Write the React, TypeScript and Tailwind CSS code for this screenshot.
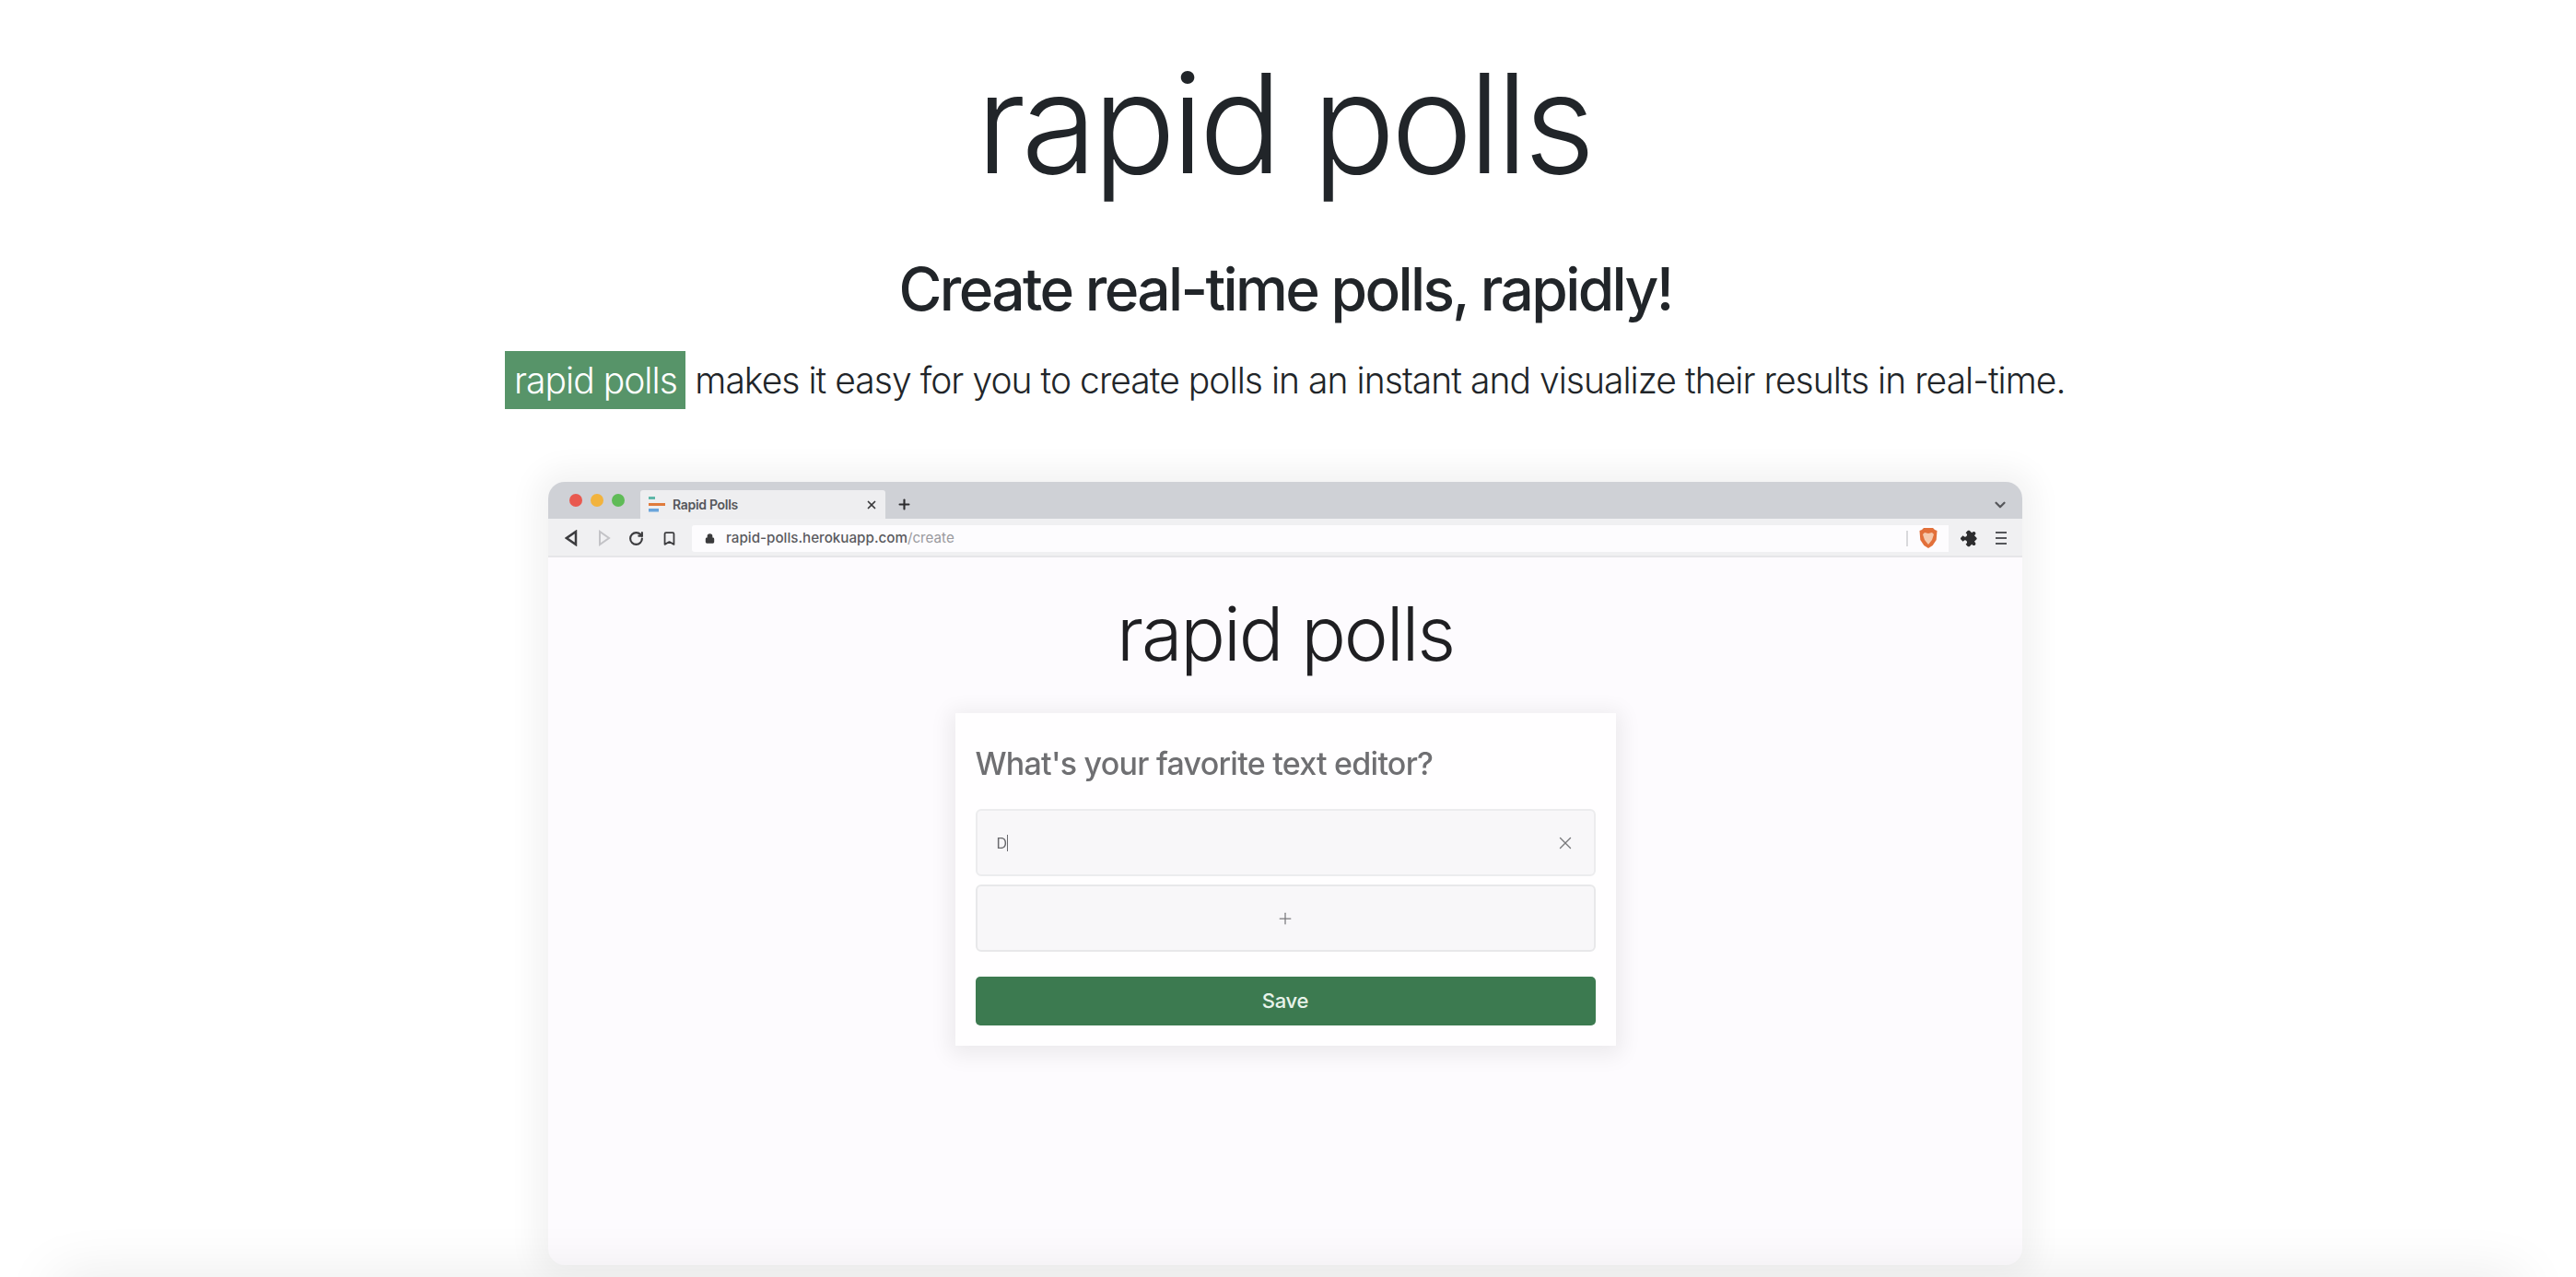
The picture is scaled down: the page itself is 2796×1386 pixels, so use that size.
import { Bookmark, ChevronDown, Lock, Plus, RotateCw, X } from "lucide-react";

function Favicon() {
  return (
    <svg width="20" height="20" viewBox="0 0 20 20">
      <rect x="1" y="1" width="7" height="3" fill="#5fb7a8" />
      <rect x="1" y="8" width="18" height="3" fill="#e07b3c" />
      <rect x="1" y="14" width="11" height="3.500" fill="#6aa5dc" />
    </svg>
  );
}

function BraveIcon() {
  return (
    <svg width="20" height="24" viewBox="0 0 20 24">
      <path d="M5 1h10l2 2 2.500 1-.8 10-4 6-4.700 3-4.700-3-4-6-.8-10L3 3z" fill="#e2703a" />
      <path d="M6 6l4 1 4-1 2 2-2 6-4 5-4-5-2-6z" fill="#f5c9ad" />
    </svg>
  );
}

function BrowserBar() {
  return (
    <div className="flex flex-col">
      <div className="flex h-[40px] items-end bg-[#cfd1d6]">
        <div className="flex h-[40px] w-[100px] shrink-0 items-center gap-[9px] pl-[23px]">
          <span className="size-[14px] rounded-full bg-[#e9594f]" />
          <span className="size-[14px] rounded-full bg-[#f2b33d]" />
          <span className="size-[14px] rounded-full bg-[#5fbb57]" />
        </div>
        <div className="flex h-[31px] w-[266px] items-center rounded-t-[3px] bg-[#eeeef0] pl-[8px] pr-[8px]">
          <Favicon />
          <span className="ml-[7px] text-[14px] font-semibold tracking-[-0.3px] text-[#55565a]">Rapid Polls</span>
          <X className="ml-auto size-[14px] text-[#3a3a3c]" strokeWidth={3} />
        </div>
        <Plus className="mb-[7px] ml-[12px] size-[17px] text-[#2c2c2e]" strokeWidth={3} />
        <ChevronDown className="mb-[6px] ml-auto mr-[15px] size-[18px] text-[#55565a]" strokeWidth={3} />
      </div>
      <div className="flex h-[42px] items-center border-b-2 border-[#e6e6e9] bg-[#f0f0f2] pl-[18px] pr-[17px] pt-[2px]">
        <svg width="14" height="18" viewBox="0 0 14 18" fill="none" stroke="#3c3c3f" strokeWidth="2.500">
          <path d="M12 2v14L2 9z" />
        </svg>
        <svg className="ml-[22px]" width="14" height="18" viewBox="0 0 14 18" fill="none" stroke="#c3c3c7" strokeWidth="2">
          <path d="M2 2v14l10-7z" />
        </svg>
        <RotateCw className="ml-[19px] size-[17px] text-[#3c3c3f]" strokeWidth={3} />
        <Bookmark className="ml-[19px] size-[17px] text-[#3c3c3f]" strokeWidth={2.5} />
        <div className="ml-[16px] flex h-[29px] flex-1 items-center rounded-l-[3px] bg-[#fdfcfe] pl-[14px] pr-[12px]">
          <Lock className="size-[11px] fill-[#3a3a3c] text-[#3a3a3c]" strokeWidth={2.5} />
          <span className="ml-[12px] text-[15.200px] font-medium text-[#5a5a5e]">
            rapid-polls.herokuapp.com<span className="font-normal text-[#9a9a9e]">/create</span>
          </span>
          <span className="ml-auto h-[17px] w-[2px] bg-[#d9d9dc]" />
          <span className="ml-[12px] flex">
            <BraveIcon />
          </span>
        </div>
        <svg className="ml-[14px] size-[19px] rotate-45" viewBox="0 0 24 24" fill="#2c2c2e">
          <path d="M20.500 11H19V7c0-1.100-.9-2-2-2h-4V3.500C13 2.120 11.880 1 10.500 1S8 2.120 8 3.500V5H4c-1.100 0-1.990.9-1.990 2v3.800H3.500c1.490 0 2.700 1.210 2.700 2.700s-1.210 2.700-2.700 2.700H2V20c0 1.100.9 2 2 2h3.800v-1.500c0-1.490 1.210-2.700 2.700-2.700 1.490 0 2.700 1.210 2.700 2.700V22H17c1.100 0 2-.9 2-2v-4h1.500c1.380 0 2.500-1.120 2.500-2.500S21.880 11 20.500 11z" />
        </svg>
        <svg className="ml-[18px]" width="12" height="16" viewBox="0 0 12 16" stroke="#55565a" strokeWidth="2">
          <path d="M0 2h12M0 8h12M0 14h12" />
        </svg>
      </div>
    </div>
  );
}

function PollCard() {
  return (
    <div className="mt-[36px] flex w-[717px] flex-col bg-[#fffeff] px-[22px] pb-[22px] pt-[31px] shadow-[0_4px_22px_6px_rgba(0,0,0,0.07)]">
      <h3 className="text-[34px] leading-[48px] font-[550] tracking-[-0.75px] text-[#6f6f72]">What's your favorite text editor?</h3>
      <div className="mt-[25px] flex h-[73px] items-center justify-between rounded-[6px] border-2 border-[#ececee] bg-[#f8f7f9] pl-[21px] pr-[20px]">
        <span className="flex items-center text-[16px] text-[#6a6a6e]">
          D<span className="h-[18px] w-px bg-[#6a6a6e]" />
        </span>
        <X className="size-[22px] text-[#79797c]" strokeWidth={1.5} />
      </div>
      <div className="mt-[9px] flex h-[73px] items-center justify-center rounded-[6px] border-2 border-[#e8e8ea] bg-[#f8f7f9]">
        <Plus className="size-[20px] text-[#79797c]" strokeWidth={1.5} />
      </div>
      <button className="mt-[27px] h-[53px] rounded-[5px] bg-[#3c7a50] text-[22px] font-medium tracking-[-0.3px] text-[#e8f3ea]">Save</button>
    </div>
  );
}

export default function App() {
  return (
    <div className="relative flex h-[1386px] w-[2796px] flex-col items-center overflow-hidden bg-white pr-[6px] font-['Inter',sans-serif] text-[#212529]">
      <h1 className="mt-[44px] -translate-x-[2px] text-[150px] leading-[180px] font-light tracking-[-4.9px]">rapid polls</h1>
      <h2 className="mt-[50px] text-[64px] leading-[80px] font-medium tracking-[-2.65px]">Create real-time polls, rapidly!</h2>
      <p className="mt-[29px] text-[39px] leading-[60px] font-[350] tracking-[-0.96px]">
        <mark className="bg-[#579469] px-[9.500px] py-[8px] text-white">rapid polls</mark> makes it easy for you to create polls in an instant and visualize their results in real-time.
      </p>
      <div className="mt-[80px] flex h-[850px] w-[1600px] shrink-0 flex-col overflow-hidden rounded-[18px] bg-[#fdfbfe] shadow-[0_0_32px_14px_rgba(0,0,0,0.05)]">
        <div className="flex h-full flex-col blur-[0.7px]">
          <BrowserBar />
          <div className="flex flex-col items-center">
            <div className="mt-[33px] text-[81px] leading-[100px] font-[350] tracking-[-2.1px] text-[#1f1f22]">rapid polls</div>
            <PollCard />
          </div>
        </div>
      </div>
      <div className="absolute inset-x-[60px] top-[1386px] h-[40px] shadow-[0_0_60px_rgba(0,0,0,0.1)]" />
    </div>
  );
}
